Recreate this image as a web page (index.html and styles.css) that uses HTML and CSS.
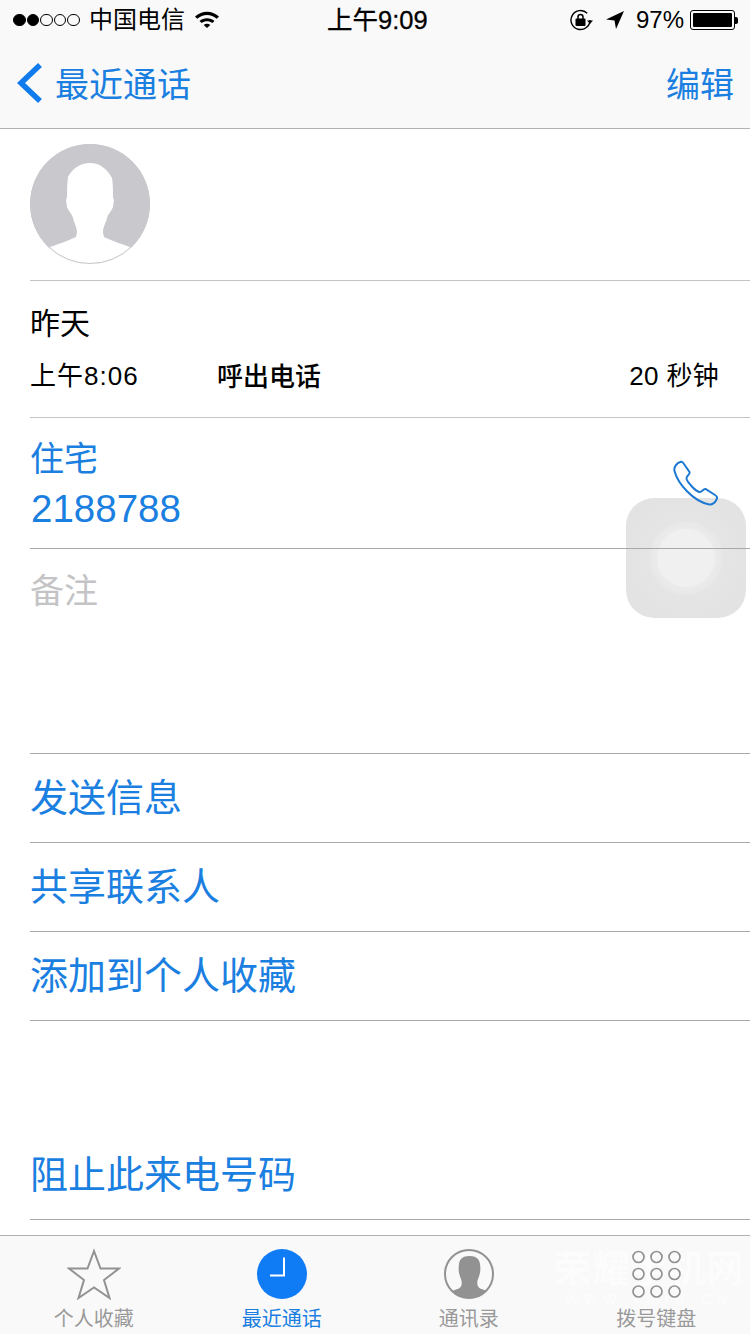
FILE: index.html
```html
<!DOCTYPE html>
<html lang="zh-CN">

<head>
  <meta charset="UTF-8" />
  <meta name="viewport" content="width=device-width, initial-scale=1.0" />
  <title>最近通话</title>
  <link rel="stylesheet" href="styles.css">
</head>

<body>
  <div class="phone">
    <header class="topBar">
      <div class="statusBar">
        <div class="statusLeft">
          <span class="signal"><i class="dot on"></i><i class="dot on"></i><i class="dot"></i><i class="dot"></i><i class="dot"></i></span>
          <span class="carrier">中国电信</span>
          <svg class="wifi" width="24" height="18" viewBox="0 0 24 18">
            <path d="M0 6.500C7 .2 17 .2 24 6.500l-2.200 2.200C16 3.600 8 3.600 2.200 8.700z" />
            <path d="M4.500 10.900c4.200-3.700 10.800-3.700 15 0l-2.200 2.200c-3-2.600-7.600-2.600-10.600 0z" />
            <path d="M8.700 15c1.900-1.600 4.700-1.600 6.600 0L12 18z" />
          </svg>
        </div>
        <div class="clock">上午9:09</div>
        <div class="statusRight">
          <svg class="rotLock" width="24" height="22" viewBox="0 0 24 22">
            <path d="M21 11a9.500 9.500 0 1 1-2.800-6.700" fill="none" stroke="#000" stroke-width="1.400" />
            <path d="M18 11.500h6l-3 3.500z" />
            <rect x="6.500" y="9.500" width="10" height="7.500" rx="1" />
            <path d="M9 10V8a2.500 2.500 0 0 1 5 0v2" fill="none" stroke="#000" stroke-width="1.500" />
          </svg>
          <svg class="arrow" width="20" height="20" viewBox="0 0 20 20">
            <path d="M19 1 1 9.500l8.500 1 1.500 8.500z" />
          </svg>
          <span class="percent">97%</span>
          <span class="battery"><span class="batteryFill"></span></span>
          <span class="batteryTip"></span>
        </div>
      </div>
      <nav class="navBar">
        <a class="backLink">
          <svg width="28" height="44" viewBox="0 0 28 44">
            <path d="M24 4 5 22l19 18" fill="none" stroke="#0f7bec" stroke-width="5.500" />
          </svg>
          <span>最近通话</span>
        </a>
        <a class="editLink">编辑</a>
      </nav>
    </header>

    <main class="content">
      <section class="row avatarRow">
        <svg class="avatar" width="120" height="120" viewBox="0 0 120 120">
          <defs>
            <clipPath id="avatarClip">
              <circle cx="60" cy="60" r="60" />
            </clipPath>
          </defs>
          <circle cx="60" cy="60" r="60" fill="#c8c8cd" />
          <path clip-path="url(#avatarClip)" fill="#fff"
            d="M60 19C50 19 42 25 38 33 37 40 37 47 37 53l-1 3 1 7C39 68 42 70 43 74 44 79 47 83 47 88 47 90 46 92 46 93 38 97 28 100 20 103v22h80v-22C92 100 82 97 74 93 74 92 73 90 73 88 73 83 76 79 77 74 78 70 81 68 83 63l1-7-1-3C83 47 83 40 82 34 77 25 70 19 60 19z" />
          <circle cx="60" cy="60" r="59.500" fill="none" stroke="#c8c8cd" />
        </svg>
      </section>

      <section class="row callRow">
        <div class="callDay">昨天</div>
        <div class="callInfo">
          <span class="callTime">上午8:06</span>
          <span class="callType">呼出电话</span>
          <span class="callLength">20 秒钟</span>
        </div>
      </section>

      <section class="row phoneRow">
        <div>
          <div class="phoneLabel">住宅</div>
          <div class="phoneNumber">2188788</div>
        </div>
        <svg class="phoneIcon" width="46" height="46" viewBox="0 0 46 46">
          <path fill="none" stroke="#1a78d2" stroke-width="2"
            d="M2.500 11C1.500 7 5 2.500 9 1.700c1.500-.2 2.500 1.300 4 3.800L17.500 12c1 2-2.500 3.500-3 6-.5 2 1.500 4 4.500 7.500s6 6.500 9 6.500c2 0 3.500-3.500 5.500-3l9.500 6c2.500 1.500 2.500 3 1 5.500-2 3.500-4.500 4.300-7.500 3.800C21 41 6 24 2.500 11z" />
        </svg>
      </section>

      <section class="row notesRow">备注</section>

      <section class="actionGroup">
        <div class="row actionRow">发送信息</div>
        <div class="row actionRow">共享联系人</div>
        <div class="row actionRow">添加到个人收藏</div>
      </section>

      <section class="actionGroup blockGroup">
        <div class="row actionRow">阻止此来电号码</div>
      </section>
    </main>

    <footer class="tabBar">
      <div class="watermark">
        <div class="markTitle">荣耀手机网</div>
        <div class="markUrl">WWW.VMIN.CN</div>
      </div>
      <div class="tab">
        <svg class="starIcon" width="54" height="52" viewBox="0 0 54 52">
          <path fill="none" stroke="#929292" stroke-width="2"
            d="M27 3l6.500 17.500H52L37 32l5.500 18L27 39.500 11.500 50 17 32 2 20.500h18.500z" />
        </svg>
        <span>个人收藏</span>
      </div>
      <div class="tab active">
        <svg width="50" height="50" viewBox="0 0 50 50">
          <circle cx="25" cy="25" r="25" fill="#0f7bf5" />
          <path d="M27 8.500v18H13" fill="none" stroke="#fff" stroke-width="2" />
        </svg>
        <span>最近通话</span>
      </div>
      <div class="tab">
        <svg width="50" height="50" viewBox="0 0 50 50">
          <defs>
            <clipPath id="tabClip">
              <circle cx="25" cy="25" r="24" />
            </clipPath>
          </defs>
          <circle cx="25" cy="25" r="24" fill="none" stroke="#929292" stroke-width="2" />
          <path clip-path="url(#tabClip)" fill="#929292"
            d="M25 7c-6 0-9.500 3-10 8-.5 3-.5 6 0 9l1.500 5c1 2 1.500 4 1 7-.5 2-2 3.500-4 4-3 1-6 2-9 4v7h42v-7c-3-2-6-3-9-4-2-.5-3.500-2-4-4-.5-3 0-5 1-7l1.500-5c.5-3 .5-6 0-9-.5-5-4-8-10-8z" />
        </svg>
        <span>通讯录</span>
      </div>
      <div class="tab">
        <svg width="50" height="50" viewBox="0 0 50 50" fill="none" stroke="#929292" stroke-width="1.700">
          <circle cx="7.500" cy="8" r="5.500" />
          <circle cx="25.500" cy="8" r="5.500" />
          <circle cx="43.500" cy="8" r="5.500" />
          <circle cx="7.500" cy="25" r="5.500" />
          <circle cx="25.500" cy="25" r="5.500" />
          <circle cx="43.500" cy="25" r="5.500" />
          <circle cx="7.500" cy="42.500" r="5.500" />
          <circle cx="25.500" cy="42.500" r="5.500" />
          <circle cx="43.500" cy="42.500" r="5.500" />
        </svg>
        <span>拨号键盘</span>
      </div>
    </footer>

    <div class="assistTouch">
      <div class="assistCore"></div>
    </div>
  </div>
</body>

</html>
```

FILE: styles.css
```css
* {
  box-sizing: border-box;
}

body {
  margin: 0;
  background: #fff;
  font-family: "Liberation Sans", "Noto Sans CJK SC", sans-serif;
  color: #000;
}

.phone {
  width: 750px;
  height: 1334px;
  display: flex;
  flex-direction: column;
  position: relative;
  overflow: hidden;
}

/* Status bar and navigation */
.topBar {
  height: 129px;
  background: #f9f9f9;
  border-bottom: 1px solid #b2b2b2;
}

.statusBar {
  height: 40px;
  padding: 0 12px 0 13px;
  display: flex;
  justify-content: space-between;
  align-items: center;
  position: relative;
}

.statusLeft,
.statusRight {
  display: flex;
  align-items: center;
}

.signal {
  display: flex;
  gap: 1px;
}

.dot {
  width: 12.600px;
  height: 12.600px;
  border: 1px solid #000;
  border-radius: 50%;
}

.dot.on {
  background: #000;
}

.carrier {
  margin-left: 9px;
  font-size: 24px;
  line-height: 40px;
}

.wifi {
  margin-left: 10px;
  margin-top: -2px;
}

.clock {
  position: absolute;
  left: 327px;
  top: 0;
  font-size: 25.500px;
  line-height: 40px;
  -webkit-text-stroke: 0.3px #000;
}

.rotLock {
  margin-right: 12px;
}

.arrow {
  margin-right: 11px;
}

.percent {
  font-size: 24px;
  line-height: 40px;
  margin-right: 6px;
}

.battery {
  width: 45px;
  height: 20px;
  padding: 2px;
  border: 1px solid #000;
  border-radius: 3px;
  display: block;
}

.batteryFill {
  display: block;
  height: 100%;
  background: #000;
  border-radius: 1px;
}

.batteryTip {
  width: 3px;
  height: 7px;
  background: #000;
  border-radius: 0 2px 2px 0;
}

.navBar {
  height: 88px;
  padding: 0 16px 3px;
  display: flex;
  justify-content: space-between;
  align-items: center;
  color: #1a7fe0;
  font-size: 34px;
}

.backLink {
  display: flex;
  align-items: center;
  gap: 11px;
}

/* Rows */
.content {
  flex: 1;
  position: relative;
  z-index: 1;
}

.row {
  margin-left: 30px;
  border-bottom: 1px solid #c4c4c4;
}

.avatarRow {
  height: 152px;
  padding-top: 15px;
}

.avatar {
  display: block;
}

.callRow {
  height: 137px;
  padding: 22px 31px 0 0;
}

.callDay {
  font-size: 30px;
  line-height: 42px;
}

.callInfo {
  margin-top: 13px;
  display: flex;
  align-items: flex-start;
  font-size: 26px;
  line-height: 36px;
}

.callTime {
  width: 187px;
  letter-spacing: 1px;
}

.callType {
  font-family: "Noto Sans CJK SC", sans-serif;
  font-weight: 500;
  flex: 1;
  margin-top: -1px;
}

.callLength {
  letter-spacing: 0.3px;
}

.phoneRow {
  height: 131px;
  padding: 18px 32px 0 0;
  display: flex;
  justify-content: space-between;
  color: #1a7fe0;
  border-bottom-color: #a8a8a8;
}

.phoneLabel {
  font-size: 34px;
  line-height: 46px;
}

.phoneNumber {
  font-size: 38.500px;
  line-height: 50px;
  margin: 2px 0 0 1px;
}

.phoneIcon {
  margin-top: 24px;
}

.notesRow {
  height: 205px;
  padding-top: 19px;
  font-size: 34px;
  line-height: 46px;
  color: #c4c4c6;
  border-bottom-color: #aaa;
}

.actionRow {
  height: 89px;
  font-size: 38px;
  line-height: 88px;
  color: #1a7fe0;
  border-bottom-color: #aaa;
}

.blockGroup {
  margin-top: 110px;
}

/* Tab bar */
.tabBar {
  height: 99px;
  position: relative;
  background: #f9f9f9;
  border-top: 1px solid #b2b2b2;
  display: grid;
  grid-template-columns: repeat(4, 1fr);
  padding: 13px 0 0;
  overflow: hidden;
}

.tab {
  display: flex;
  flex-direction: column;
  align-items: center;
  position: relative;
  color: #999;
  font-size: 20px;
  line-height: 28px;
}

.tab svg {
  display: block;
  margin-bottom: 6px;
}

.tab .starIcon {
  margin: -1px 0 5px;
}

.tab.active {
  color: #1a7fe0;
  padding-left: 1px;
}

/* Faint site mark printed across the corner of the picture */
.watermark {
  position: absolute;
  left: 548px;
  top: 14px;
  width: 202px;
  color: #fcfcfc;
  font-weight: 700;
  text-align: center;
}

.markTitle {
  font-size: 38px;
  line-height: 38px;
}

.markUrl {
  margin-top: 4px;
  font-size: 14px;
  line-height: 14px;
  letter-spacing: 6px;
}

/* Floating button, sits behind the transparent rows */
.assistTouch {
  position: absolute;
  left: 626px;
  top: 498px;
  width: 120px;
  height: 120px;
  border-radius: 28px;
  background: radial-gradient(circle, #ebebeb 29px, #e8e8e8 36px, #e5e5e5 37px, #e3e3e3 60px);
  display: flex;
  justify-content: center;
  align-items: center;
}

.assistCore {
  width: 58px;
  height: 58px;
  border-radius: 50%;
  background: #f0f0f0;
}
```
